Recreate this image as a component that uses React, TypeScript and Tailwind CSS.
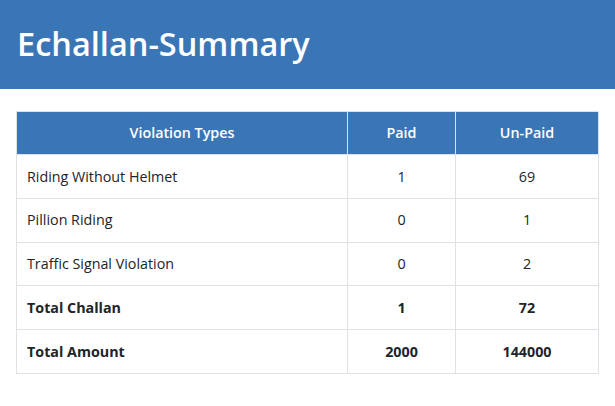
const rows = [
  { type: 'Riding Without Helmet', paid: '1', unpaid: '69' },
  { type: 'Pillion Riding', paid: '0', unpaid: '1' },
  { type: 'Traffic Signal Violation', paid: '0', unpaid: '2' },
]

const totals = [
  { type: 'Total Challan', paid: '1', unpaid: '72' },
  { type: 'Total Amount', paid: '2000', unpaid: '144000' },
]

export default function App() {
  return (
    <div className="min-h-[406px] bg-white text-[#212529]" style={{ fontFamily: '"Open Sans", "Noto Sans", sans-serif' }}>
      <div className="h-[89px] bg-[#3a75b6] flex items-center px-[17px]">
        <h1 className="text-white text-[32.5px] font-semibold leading-none pb-[1px]">Echallan-Summary</h1>
      </div>
      <div className="px-4 pt-[22px]">
        <table className="w-[583px] border-collapse text-[14.3px]">
          <thead>
            <tr className="bg-[#3a75b6] text-white h-[43px]">
              <th className="w-[331px] border border-[#dee2e6] font-semibold">Violation Types</th>
              <th className="w-[108px] border border-[#dee2e6] font-semibold">Paid</th>
              <th className="border border-[#dee2e6] font-semibold">Un-Paid</th>
            </tr>
          </thead>
          <tbody>
            {rows.map(r => (
              <tr key={r.type} className="h-[43.8px]">
                <td className="border border-[#dee2e6] px-[10px]">{r.type}</td>
                <td className="border border-[#dee2e6] text-center">{r.paid}</td>
                <td className="border border-[#dee2e6] text-center">{r.unpaid}</td>
              </tr>
            ))}
            {totals.map(r => (
              <tr key={r.type} className="h-[43.8px] font-bold">
                <td className="border border-[#dee2e6] px-[10px]">{r.type}</td>
                <td className="border border-[#dee2e6] text-center">{r.paid}</td>
                <td className="border border-[#dee2e6] text-center">{r.unpaid}</td>
              </tr>
            ))}
          </tbody>
        </table>
      </div>
    </div>
  )
}
